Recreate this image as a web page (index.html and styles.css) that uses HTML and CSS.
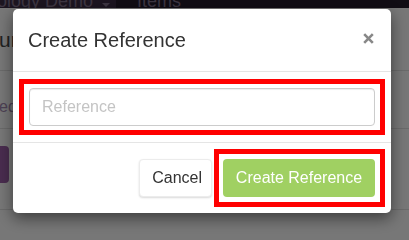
FILE: index.html
```html
<!DOCTYPE html>
<html lang="en">
<head>
<meta charset="utf-8">
<title>Create Reference</title>
<link rel="stylesheet" href="styles.css">
</head>
<body>
<div class="page">
  <nav class="navbar">
    <span class="brand">ology Demo <span class="caret"></span></span>
    <span class="nav-item">Items</span>
  </nav>
  <div class="row heading-row"><span class="heading">ur</span></div>
  <div class="row text-row"><span class="muted">ed</span></div>
  <div class="row button-row"><span class="purple-btn"></span></div>
</div>
<div class="backdrop"></div>
<div class="modal">
  <div class="modal-header">
    <h4 class="modal-title">Create Reference</h4>
    <button class="close" type="button" aria-label="Close">
      <svg width="11" height="11" viewBox="0 0 11 11"><path d="M1.2 1.2 L9.8 9.8 M9.8 1.2 L1.2 9.8" stroke="#888" stroke-width="2.6" stroke-linecap="butt"/></svg>
    </button>
  </div>
  <div class="modal-body">
    <div class="highlight field-box">
      <input class="form-control" type="text" placeholder="Reference">
    </div>
  </div>
  <div class="modal-footer">
    <button class="btn btn-default" type="button">Cancel</button>
    <div class="highlight btn-box">
      <button class="btn btn-success" type="button">Create Reference</button>
    </div>
  </div>
</div>
</body>
</html>
```
FILE: styles.css
```css
* { box-sizing: border-box; }
html, body { margin: 0; height: 100%; }
body {
  font-family: "Liberation Sans", Arial, sans-serif;
  background: #eeeeee;
  overflow: hidden;
}
.page { width: 100%; }
.navbar {
  height: 8px;
  background: #221a28;
  display: flex;
  overflow: hidden;
  font-size: 18px;
  line-height: 2px;
  color: #7a6c84;
}
.brand {
  width: 116px;
  background: #382a40;
  padding-left: 0;
  margin-left: 0;
  text-indent: -3px;
  white-space: nowrap;
}
.caret {
  display: inline-block;
  width: 0; height: 0;
  margin-left: 4px;
  border-left: 4px solid transparent;
  border-right: 4px solid transparent;
  border-top: 4px solid #7a6c84;
  vertical-align: 0;
}
.nav-item { padding-left: 21px; white-space: nowrap; }
.row { border-bottom: 1px solid #d4d4d4; }
.heading-row { height: 63px; padding-top: 20px; }
.heading { font-size: 21px; line-height: 24px; color: #444; margin-left: -1px; }
.text-row { height: 58px; padding-top: 26px; }
.muted { font-size: 16px; line-height: 20px; color: #9a82a8; margin-left: -1px; }
.button-row { height: 81px; padding-top: 17px; }
.purple-btn {
  display: block;
  width: 9px; height: 37px;
  background: #93599e;
  border-radius: 0 4px 4px 0;
}
.backdrop {
  position: fixed; inset: 0;
  background: rgba(0,0,0,0.5);
}
.modal {
  position: fixed;
  left: 13px; top: 9px;
  width: 378px;
  background: #fff;
  border-radius: 5px;
  box-shadow: 0 5px 15px rgba(0,0,0,0.5);
}
.modal-header {
  height: 63px;
  border-bottom: 1px solid #e5e5e5;
  padding: 0 17px 0 15px;
  display: flex;
  align-items: center;
  justify-content: space-between;
}
.modal-title {
  margin: 0;
  font-size: 20px;
  font-weight: normal;
  line-height: 22px;
  color: #333;
}
.close {
  border: 0; background: none; padding: 0;
  width: 11px; height: 11px;
  display: flex;
  margin-top: -3px;
}
.modal-body { padding: 7px 6px; }
.highlight { border: 5px solid #ff0000; }
.field-box { padding: 4px 5px; }
.form-control {
  display: block;
  width: 100%;
  height: 38px;
  border: 1px solid #ccc;
  border-radius: 4px;
  padding: 0 12px;
  font-family: inherit;
  font-size: 16px;
  color: #555;
  box-shadow: inset 0 1px 1px rgba(0,0,0,0.075);
  outline: none;
}
.form-control::placeholder { color: #c4c4c4; }
.modal-footer {
  border-top: 1px solid #e5e5e5;
  padding: 6px;
  display: flex;
  justify-content: flex-end;
  align-items: center;
  gap: 2px;
}
.btn {
  font-family: inherit;
  font-size: 16px;
  height: 38px;
  border-radius: 4px;
  line-height: 20px;
}
.btn-default {
  background: #fff;
  color: #333;
  border: 1px solid #ececec;
  padding: 0 9px 0 12px;
  box-shadow: 0 1px 2px rgba(0,0,0,0.15);
}
.btn-box { padding: 5px 5px 5px 4px; }
.btn-success {
  display: block;
  width: 152px;
  background: #a0d062;
  color: #fff;
  border: 0;
  padding: 0;
}
```
